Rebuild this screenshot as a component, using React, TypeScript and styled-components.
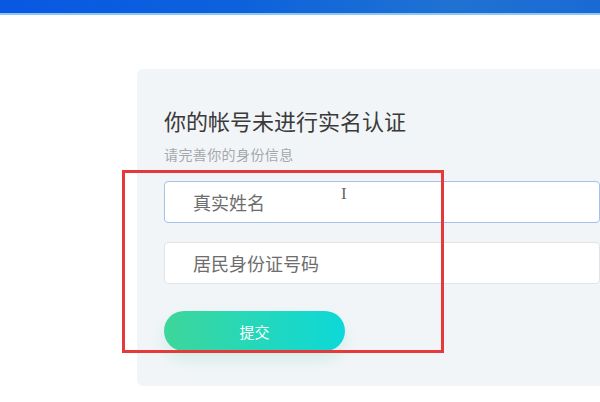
import React from "react";
import styled, { createGlobalStyle } from "styled-components";

const GlobalStyle = createGlobalStyle`
  html, body {
    margin: 0;
    padding: 0;
    background: #ffffff;
    overflow: hidden;
    font-family: "Noto Sans", "Noto Sans CJK SC", sans-serif;
  }
  * {
    box-sizing: border-box;
  }
`;

const Page = styled.div`
  position: relative;
  width: 600px;
  height: 402px;
  overflow: hidden;
`;

const TopBar = styled.div`
  height: 15px;
  background: linear-gradient(90deg, #0858e2 0%, #0d62dc 40%, #1f72d2 75%, #1a6ad4 100%);
  border-bottom: 2px solid #8fc6f2;
`;

const Main = styled.div`
  padding: 54px 0 0 137px;
`;

const Card = styled.div`
  width: 520px;
  background: #f2f5f7;
  border-radius: 6px;
  padding: 38px 0 35px 27px;
  display: flex;
  flex-direction: column;
`;

const Title = styled.h2`
  margin: 0;
  font-size: 22px;
  line-height: 28px;
  font-weight: 400;
  color: #3a3a3a;
`;

const Subtitle = styled.p`
  margin: 11px 0 0;
  font-size: 14px;
  line-height: 18px;
  letter-spacing: 0.4px;
  color: #a4a8ac;
`;

const Field = styled.input<{ $focused?: boolean }>`
  width: 436px;
  height: 42px;
  margin-top: ${(p) => (p.$focused ? "17px" : "19px")};
  padding: 0 0 0 28px;
  border: 1px solid ${(p) => (p.$focused ? "#a5c0ec" : "#e1e3e5")};
  border-radius: 4px;
  background: #ffffff;
  font-family: "Noto Sans CJK SC", sans-serif;
  font-size: 18px;
  color: #333;
  outline: none;

  &::placeholder {
    color: #6d6d6d;
  }
`;

const Submit = styled.button`
  margin-top: 27px;
  width: 181px;
  height: 40px;
  border: 0;
  border-radius: 20px;
  background: linear-gradient(90deg, #3ed69a 0%, #20d8c0 60%, #0dd8d8 100%);
  box-shadow: 0 8px 16px rgba(60, 200, 170, 0.18);
  color: #ffffff;
  font-family: "Noto Sans CJK SC", sans-serif;
  font-size: 15px;
  cursor: pointer;
`;

const Annotation = styled.div`
  position: absolute;
  left: 122px;
  top: 170px;
  width: 322px;
  height: 183px;
  border: 3px solid #e5393b;
  pointer-events: none;
`;

const TextCursor = styled.span`
  position: absolute;
  left: 341px;
  top: 184px;
  font-family: "Liberation Serif", serif;
  font-size: 17px;
  color: #666;
  pointer-events: none;
`;

export default function App() {
  return (
    <Page>
      <GlobalStyle />
      <TopBar />
      <Main>
        <Card>
          <Title>你的帐号未进行实名认证</Title>
          <Subtitle>请完善你的身份信息</Subtitle>
          <Field $focused placeholder="真实姓名" />
          <Field placeholder="居民身份证号码" />
          <Submit>提交</Submit>
        </Card>
      </Main>
      <Annotation />
      <TextCursor>I</TextCursor>
    </Page>
  );
}
